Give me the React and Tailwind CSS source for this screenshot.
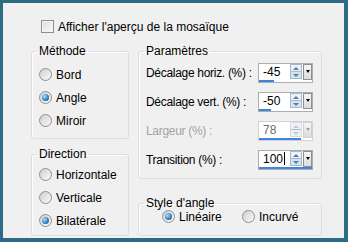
import React from "react";

const Radio = ({ checked }) => (
  <span className="flex h-[13px] w-[13px] shrink-0 items-center justify-center rounded-full border border-[#8e8f8f] bg-gradient-to-br from-[#cfcfcf] to-[#fafafa]">
    {checked && (
      <span className="h-[7px] w-[7px] rounded-full bg-[radial-gradient(circle_at_35%_35%,#a8e0f8,#2a7cc0_60%,#13477a)]" />
    )}
  </span>
);

const RadioRow = ({ label, checked }) => (
  <div className="flex h-[23px] items-center gap-[4px]">
    <Radio checked={checked} />
    <span>{label}</span>
  </div>
);

const Group = ({ title, className, children }) => (
  <fieldset
    className={`rounded-[3px] border border-[#d5dfe5] shadow-[inset_1px_1px_0_#fff] ${className}`}
  >
    <legend className="ml-[5px] px-[2px] leading-[13px]">{title}</legend>
    {children}
  </fieldset>
);

const Spin = ({ value, bar, disabled, caret }) => (
  <div
    className={`flex h-[20px] w-[55px] flex-col border ${
      disabled ? "border-[#cfd2d6] text-[#6d6d6d]" : "border-[#abadb3] text-black"
    } bg-white`}
  >
    <div className="flex flex-1 items-center">
      <span className="flex flex-1 items-center pl-[4px]">
        {value}
        {caret && <span className="ml-px h-[13px] w-px bg-black" />}
      </span>
      <div
        className={`mr-px flex h-[15px] w-[12px] flex-col border ${
          disabled ? "border-[#d8dde3]" : "border-[#a7b8ca]"
        }`}
      >
        <div className="flex flex-1 items-center justify-center bg-[#eef2f6]">
          <span
            className={`border-x-[3px] border-b-[3px] border-x-transparent ${
              disabled ? "border-b-[#c3c9cf]" : "border-b-[#5f7d9b]"
            }`}
          />
        </div>
        <div className="h-px bg-[#a7b8ca]" />
        <div
          className={`flex flex-1 items-center justify-center ${
            disabled ? "bg-[#eef2f6]" : "bg-[#cfe4f5]"
          }`}
        >
          <span
            className={`border-x-[3px] border-t-[3px] border-x-transparent ${
              disabled ? "border-t-[#c3c9cf]" : "border-t-[#5f7d9b]"
            }`}
          />
        </div>
      </div>
      <div
        className={`flex h-[16px] w-[9px] items-center justify-center border bg-gradient-to-b from-[#f6f6f6] to-[#dcdcdc] ${
          disabled ? "border-[#cfcfcf]" : "border-[#8f8f8f]"
        }`}
      >
        <span
          className={`border-x-[2.5px] border-t-[3px] border-x-transparent ${
            disabled ? "border-t-[#a0a0a0]" : "border-t-black"
          }`}
        />
      </div>
    </div>
    <div className="h-[3px]">
      <div className="h-full bg-[#3b86d6]" style={{ width: bar }} />
    </div>
  </div>
);

const ParamRow = ({ label, disabled, children }) => (
  <div className="flex h-[29px] items-center">
    <span
      className={`w-[112px] whitespace-nowrap tracking-[-0.3px] ${
        disabled ? "text-[#a3a3a3]" : ""
      }`}
    >
      {label}
    </span>
    {children}
  </div>
);

export default function App() {
  return (
    <div className="h-[242px] w-[348px] border-b-4 border-l-[3px] border-r-4 border-t-[3px] border-[#2d6a84] bg-[#f0f0f0] font-['Liberation_Sans',Arial,sans-serif] text-[12px] leading-[14px] text-black">
      <div className="pl-[28px] pt-[17px]">
        <div className="ml-[10px] flex h-[13px] items-center gap-[4px]">
          <span className="h-[13px] w-[13px] border border-[#8e8f8f] bg-gradient-to-br from-[#dcdcdc] to-[#fbfbfb] shadow-[inset_0_0_0_1px_#f4f4f4]" />
          <span>Afficher l'aperçu de la mosaïque</span>
        </div>

        <div className="mt-[12px] flex gap-[9px]">
          <div className="flex w-[98px] flex-col gap-[9px]">
            <Group title="Méthode" className="h-[94px]">
              <div className="pl-[7px] pt-[5px]">
                <RadioRow label="Bord" />
                <RadioRow label="Angle" checked />
                <RadioRow label="Miroir" />
              </div>
            </Group>
            <Group title="Direction" className="h-[88px]">
              <div className="pl-[7px] pt-[2px]">
                <RadioRow label="Horizontale" />
                <RadioRow label="Verticale" />
                <RadioRow label="Bilatérale" checked />
              </div>
            </Group>
          </div>

          <div className="flex w-[184px] flex-col gap-[18px]">
            <Group title="Paramètres" className="h-[134px]">
              <div className="pl-[7px]">
                <ParamRow label="Décalage horiz. (%) :">
                  <Spin value="-45" bar="15px" />
                </ParamRow>
                <ParamRow label="Décalage vert. (%) :">
                  <Spin value="-50" bar="12px" />
                </ParamRow>
                <ParamRow label="Largeur (%) :" disabled>
                  <Spin value="78" bar="42px" disabled />
                </ParamRow>
                <ParamRow label="Transition (%) :">
                  <Spin value="100" bar="53px" caret />
                </ParamRow>
              </div>
            </Group>
            <Group title="Style d'angle" className="h-[39px]">
              <div className="flex h-[13px] items-center pl-[23px]">
                <div className="flex w-[80px] items-center gap-[4px]">
                  <Radio checked />
                  <span>Linéaire</span>
                </div>
                <div className="flex items-center gap-[4px]">
                  <Radio />
                  <span>Incurvé</span>
                </div>
              </div>
            </Group>
          </div>
        </div>
      </div>
    </div>
  );
}
